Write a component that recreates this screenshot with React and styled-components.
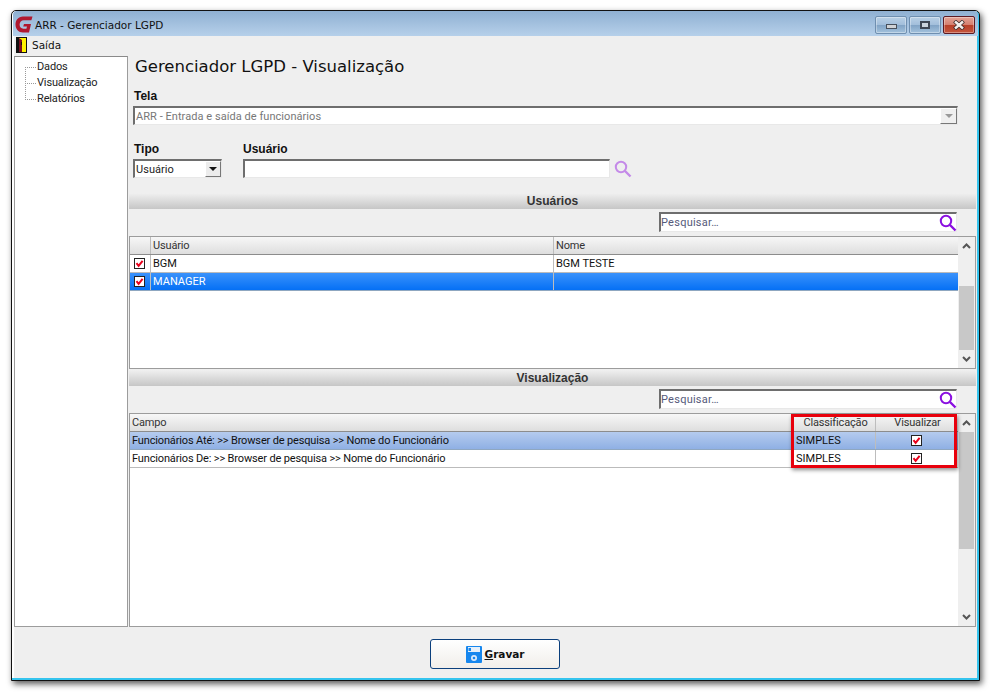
import React from "react";
import styled, { createGlobalStyle } from "styled-components";

const GlobalStyle = createGlobalStyle`
  html, body {
    margin: 0;
    padding: 0;
    background: #fff;
  }
  * {
    box-sizing: border-box;
  }
`;

const Page = styled.div`
  width: 991px;
  height: 692px;
  padding: 10px 11px;
  font-family: Roboto, "Liberation Sans", Arial, sans-serif;
  font-size: 11px;
  color: #111;
  overflow: hidden;
`;

const Win = styled.div`
  width: 969px;
  height: 671px;
  display: flex;
  flex-direction: column;
  background: #efefef;
  border: 1px solid #111;
  border-radius: 5px 5px 0 0;
  box-shadow: 2px 3px 6px rgba(0, 0, 0, 0.65), inset -2px -2px 0 #35c4ee, inset 2px 0 0 #fff;
  padding: 0 2px 3px 2px;
`;

const TitleBar = styled.div`
  height: 25px;
  margin: 0 -1px;
  padding: 4px 3px 2px 2px;
  display: flex;
  align-items: center;
  background: linear-gradient(#8fb0d2, #b6d0ea);
  border-radius: 4px 4px 0 0;
`;

const TitleText = styled.span`
  margin-left: 2px;
  font-family: "DejaVu Sans", sans-serif;
  font-size: 10.5px;
  flex: 1;
`;

const CtlBtn = styled.div`
  width: 32px;
  height: 18px;
  margin-left: 2px;
  border: 1px solid ${(p) => (p.$close ? "#5c1a24" : "#6f8fb0")};
  border-radius: 2px;
  display: flex;
  align-items: center;
  justify-content: center;
  background: ${(p) =>
    p.$close
      ? "linear-gradient(#e3a497, #d57f70 48%, #b8402a 52%, #c4553d)"
      : "linear-gradient(#b9d0e6, #a3bfdb 48%, #82a4c6 52%, #a3c2dd)"};
  box-shadow: inset 0 0 0 1px rgba(255, 255, 255, 0.35);
`;

const MinGlyph = styled.div`
  width: 11px;
  height: 5px;
  margin-top: 3px;
  background: #cfd2d6;
  border: 1px solid #47505c;
`;

const MaxGlyph = styled.div`
  width: 10px;
  height: 8px;
  background: #c9d3de;
  border: 2px solid #3c4554;
`;

const MenuBar = styled.div`
  height: 18px;
  display: flex;
  align-items: center;
  padding-left: 2px;
  gap: 5px;
  font-family: "DejaVu Sans", sans-serif;
  font-size: 10.5px;
`;

const Body = styled.div`
  flex: 1;
  min-height: 0;
  display: flex;
  flex-direction: column;
`;

const Split = styled.div`
  flex: 1;
  min-height: 0;
  display: flex;
  gap: 1px;
  padding-top: 2px;
`;

const Tree = styled.div`
  width: 114px;
  background: #fff;
  border: 1px solid #9c9c9c;
  border-top-color: #8a8a8a;
  padding: 2px 0 0 10px;
`;

const TreeItem = styled.div`
  height: 16px;
  line-height: 16px;
  display: flex;
  align-items: center;
  color: #222;
  letter-spacing: -0.15px;
`;

const TreeDots = styled.span`
  display: inline-block;
  width: 12px;
  height: 16px;
  background:
    repeating-linear-gradient(to right, #999 0 1px, transparent 1px 2px) 0 8px / 11px 1px no-repeat,
    repeating-linear-gradient(to bottom, #999 0 1px, transparent 1px 2px) 0 ${(p) => (p.$first ? "8px" : "0")} / 1px ${(p) => (p.$last ? "9px" : "16px")} no-repeat;
`;

const Main = styled.div`
  flex: 1;
  min-width: 0;
  display: flex;
  flex-direction: column;
`;

const Heading = styled.h1`
  margin: 0;
  padding: 1px 0 0 6px;
  height: 34px;
  font-family: "DejaVu Sans", sans-serif;
  font-weight: 400;
  font-size: 16.5px;
  line-height: 20px;
  color: #111;
`;

const FieldBlock = styled.div`
  padding-left: 4px;
`;

const Label = styled.div`
  height: 13px;
  line-height: 13px;
  font-family: "Liberation Sans", Arial, sans-serif;
  font-size: 12px;
  font-weight: 700;
  padding-left: ${(p) => (p.$flush ? 0 : 1)}px;
  margin-bottom: 3px;
  color: #111;
`;

const Sunken = styled.div`
  height: 19px;
  width: ${(p) => p.$w}px;
  background: #fff;
  border-style: solid;
  border-width: 2px 1px 1px 2px;
  border-color: #6e6e6e #e8e8e8 #e8e8e8 #6e6e6e;
  display: flex;
  align-items: center;
  padding-left: 1px;
  letter-spacing: 0.05px;
  color: ${(p) => p.$color || "#222"};
`;

const ComboBtn = styled.div`
  margin-left: auto;
  width: ${(p) => (p.$flat ? 17 : 16)}px;
  height: 16px;
  background: ${(p) => (p.$flat ? "#efefef" : "#ececec")};
  border: 1px solid;
  border-color: #fff #777 #777 #fff;
  display: flex;
  align-items: center;
  justify-content: center;
  &::after {
    content: "";
    border-style: solid;
    border-width: 4px 4px 0 4px;
    border-color: ${(p) => (p.$flat ? "#999" : "#111")} transparent transparent transparent;
  }
`;

const TelaRow = styled.div`
  padding-left: 4px;
  margin-bottom: 18px;
`;

const FilterRow = styled.div`
  display: flex;
  margin-bottom: 15px;
`;

const UserField = styled.div`
  margin-left: 21px;
`;

const UserInputRow = styled.div`
  display: flex;
  align-items: center;
  gap: 4px;
`;

const SectionBar = styled.div`
  height: 16px;
  line-height: 16px;
  text-align: center;
  font-family: "Liberation Sans", Arial, sans-serif;
  font-size: 12px;
  font-weight: 700;
  color: #333;
  background: linear-gradient(#f0f0f0, #c6c6c6);
  margin-right: 1px;
`;

const SearchRow = styled.div`
  display: flex;
  justify-content: flex-end;
  padding: 3px 20px 4px 0;
`;

const SearchBox = styled(Sunken)`
  height: 20px;
  color: #555a7a;
  padding-left: 0;
  letter-spacing: 0.25px;
  justify-content: space-between;
`;

const SearchLens = styled.span`
  display: flex;
  margin-right: -1px;
`;

const Grid = styled.div`
  flex: ${(p) => (p.$grow ? 1 : "none")};
  height: ${(p) => (p.$grow ? "auto" : `${p.$h}px`)};
  margin-bottom: ${(p) => (p.$grow ? 0 : 1)}px;
  min-height: 0;
  display: flex;
  background: #fff;
  border: 1px solid #9c9c9c;
  margin-right: 1px;
  position: relative;
`;

const GridBody = styled.div`
  flex: 1;
  min-width: 0;
`;

const Row = styled.div`
  display: grid;
  grid-template-columns: ${(p) => p.$cols};
  height: 18px;
  border-bottom: 1px solid ${(p) => (p.$selected ? "#8fa7c0" : "#bbb")};
  color: ${(p) => (p.$selected === "blue" ? "#fff" : "#111")};
  background: ${(p) =>
    p.$selected === "blue"
      ? "linear-gradient(#3a92fb, #0570f5)"
      : p.$selected === "soft"
      ? "linear-gradient(#b5cbee, #8fb0e4)"
      : "#fff"};
`;

const HeaderRow = styled(Row)`
  background: linear-gradient(#f7f7f7, #dedede);
  color: #333;
  border-bottom: 1px solid #8c8c8c;
  letter-spacing: -0.15px;
`;

const Cell = styled.div`
  padding: 1px 0 0 2px;
  line-height: 16px;
  white-space: nowrap;
  overflow: hidden;
  border-right: 1px solid ${(p) => (p.$plain ? "transparent" : "#bdbdbd")};
  text-align: ${(p) => p.$align || "left"};
`;

const CampoCell = styled(Cell)`
  letter-spacing: -0.15px;
`;

const CheckCell = styled(Cell)`
  display: flex;
  align-items: center;
  justify-content: ${(p) => (p.$left ? "flex-start" : "center")};
  padding: 0 0 0 ${(p) => (p.$left ? "4px" : "0")};
`;

const Scroll = styled.div`
  width: 17px;
  background: #efefef;
  display: flex;
  flex-direction: column;
  align-items: center;
`;

const ScrollArrow = styled.div`
  height: 18px;
  width: 100%;
  display: flex;
  align-items: center;
  justify-content: center;
`;

const ScrollTrack = styled.div`
  flex: 1;
  width: 100%;
  padding: ${(p) => p.$top}px 1px ${(p) => p.$bottom}px 1px;
`;

const ScrollThumb = styled.div`
  height: 100%;
  background: #c8c8c8;
`;

const Highlight = styled.div`
  position: absolute;
  top: 0;
  right: 18px;
  width: 166px;
  height: 54px;
  border: 3px solid #e8000c;
  box-shadow: 1px 2px 4px rgba(0, 0, 0, 0.45);
  pointer-events: none;
`;

const Footer = styled.div`
  height: 50px;
  display: flex;
  justify-content: center;
  align-items: center;
  padding-top: 4px;
  margin-left: -2px;
`;

const SaveButton = styled.button`
  width: 130px;
  height: 30px;
  display: flex;
  align-items: center;
  justify-content: center;
  gap: 3px;
  background: linear-gradient(#fff, #f1eeea);
  border: 1px solid #0b3f7c;
  border-radius: 3px;
  font-family: "DejaVu Sans", sans-serif;
  font-size: 10.5px;
  font-weight: 700;
  color: #111;
  padding: 0 0 0 1px;
`;

const Check = () => (
  <svg width="11" height="11" viewBox="0 0 11 11">
    <rect x="0.5" y="0.5" width="10" height="10" fill="#fff" stroke="#222" />
    <path d="M2.5 5.2 L4.6 7.8 L8.6 2.8" fill="none" stroke="#e8001c" strokeWidth="2" />
  </svg>
);

const Lens = ({ color = "#8a10e0", size = 18 }) => (
  <svg width={size} height={size} viewBox="0 0 18 18">
    <circle cx="7" cy="7" r="5.2" fill="none" stroke={color} strokeWidth="2" />
    <path d="M11 11 L16.5 16.5" stroke={color} strokeWidth="2.4" />
  </svg>
);

const Chevron = ({ up }) => (
  <svg width="9" height="6" viewBox="0 0 9 6">
    <path d={up ? "M1 5 L4.5 1.5 L8 5" : "M1 1 L4.5 4.5 L8 1"} fill="none" stroke="#555" strokeWidth="2" />
  </svg>
);

const Logo = () => (
  <svg width="18" height="17" viewBox="0 0 18 17">
    <path
      d="M17.5 0.5 H8 C3.2 0.5 0.5 4.2 0.5 8.5 C0.5 13.2 3.6 16.5 8 16.5 H14 L16 8 H9 L8.2 10.6 H12 L11.4 12.8 H8.4 C6 12.8 4.6 10.9 4.6 8.6 C4.6 6.1 6.3 4.2 8.8 4.2 H16.4 Z"
      fill="#b0182f"
    />
  </svg>
);

const ExitIcon = () => (
  <svg width="11" height="16" viewBox="0 0 11 16">
    <rect x="0" y="0" width="11" height="16" fill="#111" />
    <rect x="3" y="1" width="7" height="14" fill="#fff200" />
    <path d="M3 1 L6 3 V15 H3 Z" fill="#7a1020" />
    <rect x="5" y="5" width="1" height="3" fill="#111" />
  </svg>
);

const Disk = () => (
  <svg width="16" height="17" viewBox="0 0 16 17">
    <rect width="16" height="17" rx="1" fill="#1787ee" />
    <rect x="2" y="1" width="12" height="5" fill="#e6f0fa" />
    <rect x="2.5" y="2" width="2.5" height="3" fill="#1787ee" />
    <circle cx="8" cy="12" r="3" fill="#dceafa" />
    <circle cx="8" cy="12" r="1.3" fill="#1787ee" />
  </svg>
);

const CloseGlyph = () => (
  <svg width="14" height="10" viewBox="0 0 14 10">
    <path d="M2.5 1 L11.5 9 M11.5 1 L2.5 9" stroke="#3a2a2a" strokeWidth="4" />
    <path d="M3 1.5 L11 8.5 M11 1.5 L3 8.5" stroke="#f4f0ee" strokeWidth="2.4" />
  </svg>
);

const usuarios = [
  { usuario: "BGM", nome: "BGM TESTE" },
  { usuario: "MANAGER", nome: "", selected: "blue" },
];

const campos = [
  { campo: "Funcionários Até: >> Browser de pesquisa >> Nome do Funcionário", selected: "soft" },
  { campo: "Funcionários De: >> Browser de pesquisa >> Nome do Funcionário" },
];

const USER_COLS = "21px 403px 1fr";
const CAMPO_COLS = "664px 82px 1fr";

const App = () => {
  return (
    <Page>
      <GlobalStyle />
      <Win>
        <TitleBar>
          <Logo />
          <TitleText>ARR - Gerenciador LGPD</TitleText>
          <CtlBtn><MinGlyph /></CtlBtn>
          <CtlBtn><MaxGlyph /></CtlBtn>
          <CtlBtn $close><CloseGlyph /></CtlBtn>
        </TitleBar>
        <MenuBar>
          <ExitIcon />
          Saída
        </MenuBar>
        <Body>
          <Split>
            <Tree>
              <TreeItem><TreeDots $first />Dados</TreeItem>
              <TreeItem><TreeDots />Visualização</TreeItem>
              <TreeItem><TreeDots $last />Relatórios</TreeItem>
            </Tree>
            <Main>
              <Heading>Gerenciador LGPD - Visualização</Heading>
              <TelaRow>
                <Label>Tela</Label>
                <Sunken $w={825} $color="#777">
                  ARR - Entrada e saída de funcionários
                  <ComboBtn $flat />
                </Sunken>
              </TelaRow>
              <FilterRow>
                <FieldBlock>
                  <Label>Tipo</Label>
                  <Sunken $w={89}>
                    Usuário
                    <ComboBtn />
                  </Sunken>
                </FieldBlock>
                <UserField>
                  <Label $flush>Usuário</Label>
                  <UserInputRow>
                    <Sunken $w={367} />
                    <Lens color="#c48ae8" />
                  </UserInputRow>
                </UserField>
              </FilterRow>

              <SectionBar>Usuários</SectionBar>
              <SearchRow>
                <SearchBox $w={298}>
                  Pesquisar…
                  <SearchLens><Lens /></SearchLens>
                </SearchBox>
              </SearchRow>
              <Grid $h={133}>
                <GridBody>
                  <HeaderRow $cols={USER_COLS}>
                    <Cell />
                    <Cell>Usuário</Cell>
                    <Cell $plain>Nome</Cell>
                  </HeaderRow>
                  {usuarios.map((u) => (
                    <Row key={u.usuario} $cols={USER_COLS} $selected={u.selected}>
                      <CheckCell $left><Check /></CheckCell>
                      <Cell>{u.usuario}</Cell>
                      <Cell $plain>{u.nome}</Cell>
                    </Row>
                  ))}
                </GridBody>
                <Scroll>
                  <ScrollArrow><Chevron up /></ScrollArrow>
                  <ScrollTrack $top={31} $bottom={0}><ScrollThumb /></ScrollTrack>
                  <ScrollArrow><Chevron /></ScrollArrow>
                </Scroll>
              </Grid>

              <SectionBar>Visualização</SectionBar>
              <SearchRow>
                <SearchBox $w={298}>
                  Pesquisar…
                  <SearchLens><Lens /></SearchLens>
                </SearchBox>
              </SearchRow>
              <Grid $grow>
                <GridBody>
                  <HeaderRow $cols={CAMPO_COLS}>
                    <Cell>Campo</Cell>
                    <Cell $align="center">Classificação</Cell>
                    <Cell $plain $align="center">Visualizar</Cell>
                  </HeaderRow>
                  {campos.map((c) => (
                    <Row key={c.campo} $cols={CAMPO_COLS} $selected={c.selected}>
                      <CampoCell>{c.campo}</CampoCell>
                      <Cell>SIMPLES</Cell>
                      <CheckCell $plain><Check /></CheckCell>
                    </Row>
                  ))}
                </GridBody>
                <Scroll>
                  <ScrollArrow><Chevron up /></ScrollArrow>
                  <ScrollTrack $top={0} $bottom={59}><ScrollThumb /></ScrollTrack>
                  <ScrollArrow><Chevron /></ScrollArrow>
                </Scroll>
                <Highlight />
              </Grid>
            </Main>
          </Split>
          <Footer>
            <SaveButton>
              <Disk />
              <span><u>G</u>ravar</span>
            </SaveButton>
          </Footer>
        </Body>
      </Win>
    </Page>
  );
};

export default App;
